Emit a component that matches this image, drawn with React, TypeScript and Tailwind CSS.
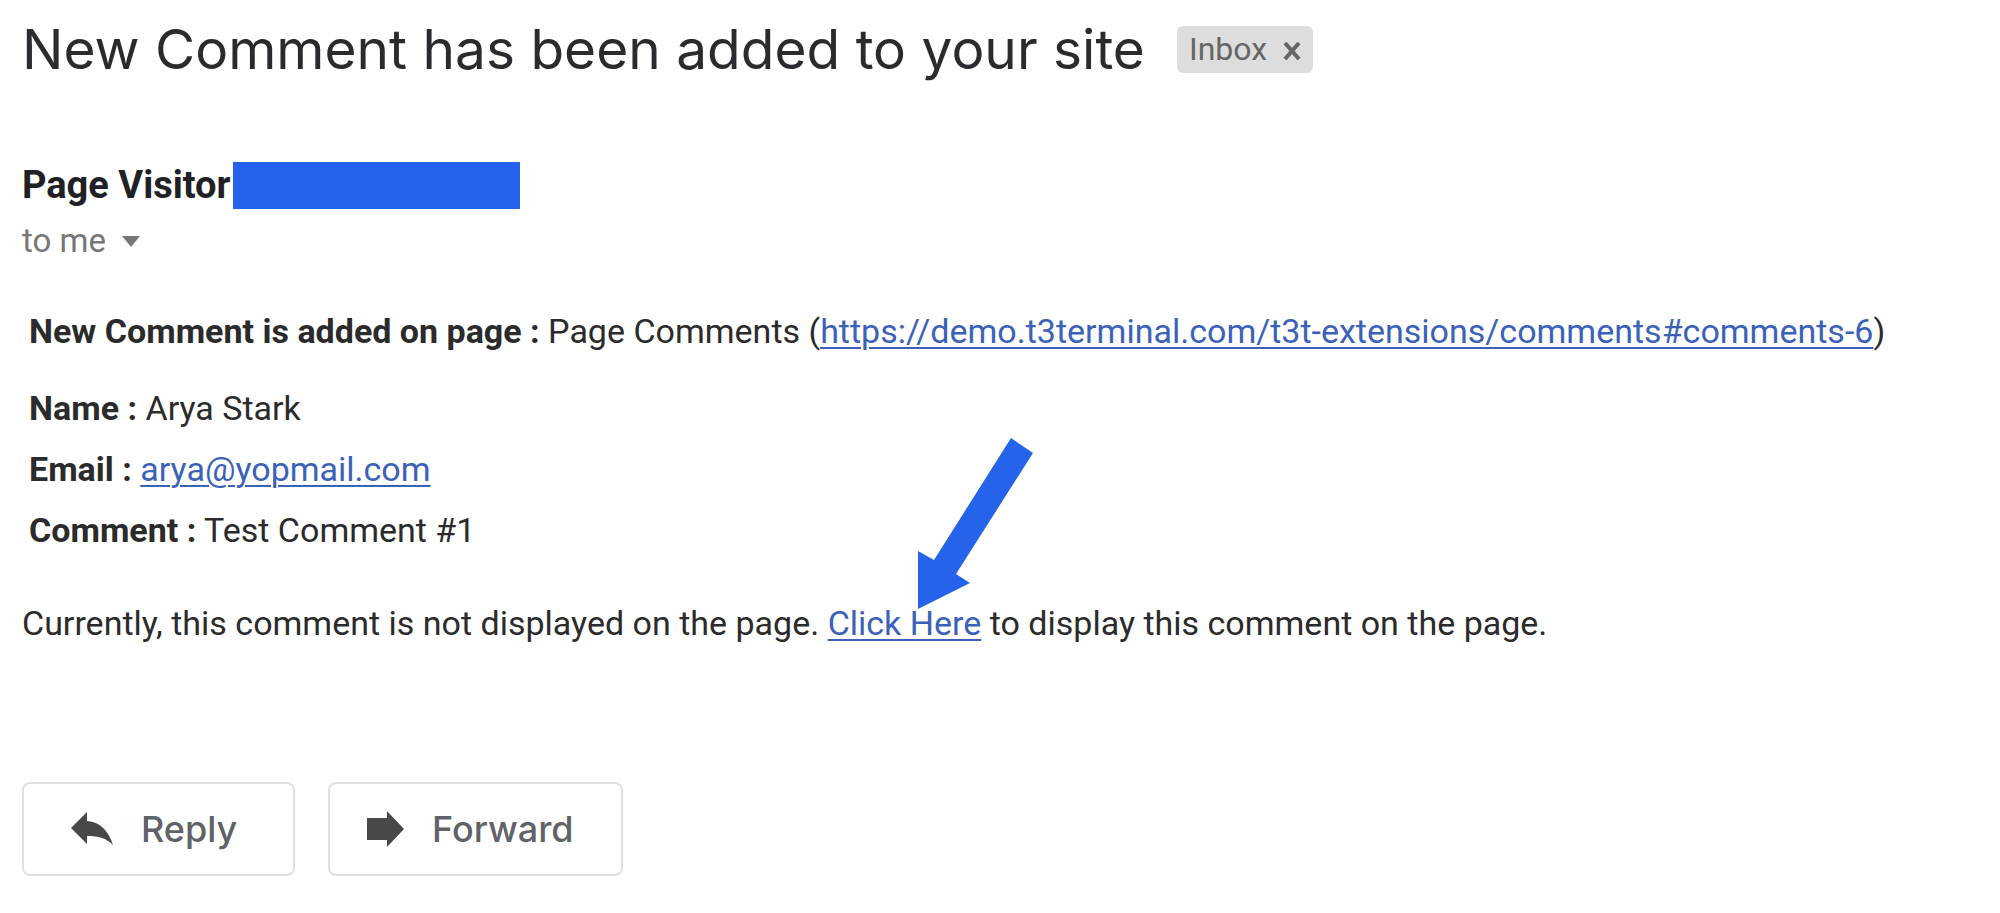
import React from 'react'

interface FieldProps {
  label: string
  children: React.ReactNode
}

// Bold label followed by its value on one line
function Field({ label, children }: FieldProps) {
  return (
    <p>
      <b className="font-bold">{label} :</b> {children}
    </p>
  )
}

const linkClass = 'text-[#3b62b8] underline decoration-2 underline-offset-4'

export default function App() {
  return (
    <main className="bg-white px-[22px] pt-3 pb-9 font-['Roboto',sans-serif] text-[34px] leading-[61px] text-[#2b2b2b]">
      {/* ── Subject ── */}
      <header className="flex items-center gap-8">
        <h1 className="font-['Inter',sans-serif] text-[55px] leading-[74px] text-[#2a2b2e]">New Comment has been added to your site</h1>
        <div className="flex h-[47px] items-center gap-4 rounded-md bg-[#dddddd] px-3 text-[#666666]">
          <span className="text-[32px] leading-none">Inbox</span>
          <button type="button" aria-label="Remove label" className="pt-1">
            <svg className="h-[18px] w-[18px]" viewBox="0 0 18 18" fill="none" stroke="currentColor" strokeWidth="4">
              <path d="M2 1l14 16M16 1L2 17" />
            </svg>
          </button>
        </div>
      </header>

      {/* ── Sender ── */}
      <section className="mt-[75px]">
        <div className="flex items-center gap-[2px]">
          <strong className="text-[38px] leading-[48px] font-bold text-[#202124]">Page Visitor</strong>
          <span className="h-[47px] w-[287px] bg-[#2563eb]" />
        </div>
        <button type="button" className="mt-1 flex items-center gap-4 text-[33px] leading-[56px] text-[#777777]">
          to me
          <svg className="h-[11px] w-[18px]" viewBox="0 0 18 11" fill="currentColor">
            <path d="M0 0h18l-9 11z" />
          </svg>
        </button>
      </section>

      {/* ── Body ── */}
      <section className="mt-8">
        <div className="pl-[7px]">
          <Field label="New Comment is added on page">
            Page Comments (
            <a href="#comments-6" className={linkClass}>https://demo.t3terminal.com/t3t-extensions/comments#comments-6</a>)
          </Field>
          <div className="mt-4">
            <Field label="Name">Arya Stark</Field>
            <Field label="Email">
              <a href="mailto:arya@yopmail.com" className={linkClass}>arya@yopmail.com</a>
            </Field>
            <Field label="Comment">Test Comment #1</Field>
          </div>
        </div>
        <p className="mt-8">
          Currently, this comment is not displayed on the page.{' '}
          <span className="relative">
            <a href="#display" className={linkClass}>Click Here</a>
            {/* Pointer over the link */}
            <svg className="pointer-events-none absolute bottom-[34px] left-[90px] h-[171px] w-[115px]" viewBox="0 0 115 171" fill="#2563eb">
              <path d="M0 171V113l16 9L93 0l22 15L38 136l14 9z" />
            </svg>
          </span>{' '}
          to display this comment on the page.
        </p>
      </section>

      {/* ── Actions ── */}
      <footer className="mt-32 flex gap-[33px] font-['Inter',sans-serif] text-[36px] leading-none font-medium text-[#5f6368]">
        <button type="button" className="flex h-[94px] w-[273px] items-center gap-7 rounded-lg border-2 border-[#e0e0e0] pl-[47px]">
          <svg className="h-[34px] w-[42px]" viewBox="0 0 42 34" fill="#484848">
            <path d="M0 16L16 0v9C30 10 38 20 42 33C35 26 28 24 16 24v8z" />
          </svg>
          Reply
        </button>
        <button type="button" className="flex h-[94px] w-[295px] items-center gap-7 rounded-lg border-2 border-[#e0e0e0] pl-[37px]">
          <svg className="h-[36px] w-[37px]" viewBox="0 0 37 36" fill="#484848">
            <path d="M0 7h20V0l17 18-17 18v-7H0z" />
          </svg>
          Forward
        </button>
      </footer>
    </main>
  )
}
